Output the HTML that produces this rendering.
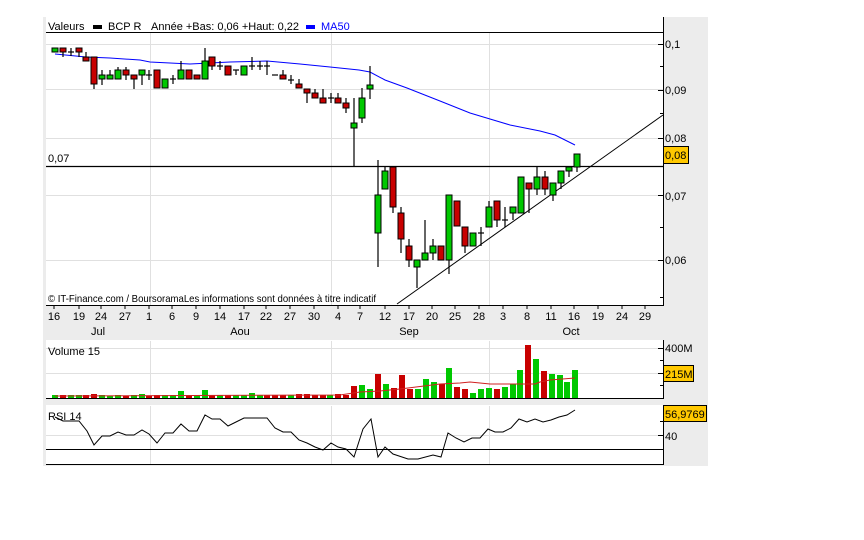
<!DOCTYPE html>
<html><head><meta charset="utf-8"><style>
html,body{margin:0;padding:0;background:#fff;width:864px;height:540px;overflow:hidden}
svg{display:block;font-family:"Liberation Sans",sans-serif;font-size:11px}
</style></head><body>
<svg width="864" height="540" viewBox="0 0 864 540" xmlns="http://www.w3.org/2000/svg">
<rect x="43" y="17" width="665" height="449" fill="#ececec"/>
<rect x="46" y="17" width="617" height="288" fill="#fff"/>
<g stroke="#e0e0e0" stroke-width="1">
<line x1="46" y1="44.5" x2="663" y2="44.5"/><line x1="46" y1="89.5" x2="663" y2="89.5"/><line x1="46" y1="138.5" x2="663" y2="138.5"/><line x1="46" y1="195.5" x2="663" y2="195.5"/><line x1="46" y1="260.5" x2="663" y2="260.5"/>
<line x1="150.5" y1="33" x2="150.5" y2="305"/><line x1="331.5" y1="33" x2="331.5" y2="305"/><line x1="489.5" y1="33" x2="489.5" y2="305"/>
</g>
<line x1="46" y1="32.5" x2="663" y2="32.5" stroke="#000"/>
<line x1="663.5" y1="17" x2="663.5" y2="306" stroke="#000"/>
<line x1="46" y1="305.5" x2="664" y2="305.5" stroke="#000"/>
<g stroke="#000"><line x1="658" y1="44.5" x2="663" y2="44.5"/><line x1="660" y1="66.5" x2="663" y2="66.5"/><line x1="658" y1="90.5" x2="663" y2="90.5"/><line x1="660" y1="113.5" x2="663" y2="113.5"/><line x1="658" y1="138.5" x2="663" y2="138.5"/><line x1="658" y1="195.5" x2="663" y2="195.5"/><line x1="660" y1="227.5" x2="663" y2="227.5"/><line x1="658" y1="260.5" x2="663" y2="260.5"/><line x1="660" y1="297.5" x2="663" y2="297.5"/></g>
<g fill="#000"><text x="665" y="48">0,1</text><text x="665" y="94">0,09</text><text x="665" y="142">0,08</text><text x="665" y="200">0,07</text><text x="665" y="264">0,06</text></g>
<rect x="663.5" y="146.5" width="25" height="17" fill="#ffc800" stroke="#000"/>
<text x="665" y="159">0,08</text>
<text x="48" y="30">Valeurs</text>
<rect x="93" y="25" width="9" height="4" fill="#000"/>
<text x="108" y="30">BCP R</text>
<text x="151" y="30">Année +Bas: 0,06 +Haut: 0,22</text>
<rect x="306" y="25" width="9" height="4" fill="#0000ff"/>
<text x="321" y="30" fill="#0000ff">MA50</text>
<line x1="46" y1="166.5" x2="663" y2="166.5" stroke="#000" stroke-width="1.2"/>
<text x="48" y="162">0,07</text>
<line x1="397" y1="304" x2="663" y2="115" stroke="#000" stroke-width="1"/>
<polyline fill="none" stroke="#0000ff" stroke-width="1" points="55,54 86,57 110,58 140,60 150,62 190,64 230,62 267,61 300,64 330,67 359,70 370,72 385,80 407,88 440,101 470,113 490,119 510,125 540,131 555,135 575,145"/>
<g stroke="#000" stroke-width="1">
<g stroke-width="1.2">
<line x1="55" y1="48" x2="55" y2="52"/><line x1="63" y1="48" x2="63" y2="57"/><line x1="71" y1="48" x2="71" y2="56"/><line x1="68" y1="52" x2="74" y2="52"/><line x1="79" y1="48" x2="79" y2="57"/><line x1="86" y1="52" x2="86" y2="61"/><line x1="94" y1="57" x2="94" y2="89"/><line x1="102" y1="70" x2="102" y2="85"/><line x1="110" y1="70" x2="110" y2="79"/><line x1="118" y1="67" x2="118" y2="79"/><line x1="126" y1="67" x2="126" y2="80"/><line x1="134" y1="75" x2="134" y2="89"/><line x1="142" y1="70" x2="142" y2="85"/><line x1="149" y1="70" x2="149" y2="80"/><line x1="146" y1="75" x2="152" y2="75"/><line x1="157" y1="70" x2="157" y2="88"/><line x1="173" y1="75" x2="173" y2="84"/><line x1="170" y1="79" x2="176" y2="79"/><line x1="181" y1="61" x2="181" y2="79"/><line x1="205" y1="48" x2="205" y2="79"/><line x1="212" y1="57" x2="212" y2="70"/><line x1="220" y1="61" x2="220" y2="70"/><line x1="217" y1="66" x2="223" y2="66"/><line x1="236" y1="70" x2="236" y2="75"/><line x1="233" y1="70" x2="239" y2="70"/><line x1="252" y1="57" x2="252" y2="70"/><line x1="249" y1="66" x2="255" y2="66"/><line x1="260" y1="61" x2="260" y2="70"/><line x1="257" y1="66" x2="263" y2="66"/><line x1="267" y1="61" x2="267" y2="75"/><line x1="264" y1="66" x2="270" y2="66"/><line x1="272" y1="75" x2="278" y2="75"/><line x1="283" y1="70" x2="283" y2="79"/><line x1="291" y1="75" x2="291" y2="84"/><line x1="288" y1="80" x2="294" y2="80"/><line x1="299" y1="79" x2="299" y2="88"/><line x1="307" y1="89" x2="307" y2="103"/><line x1="315" y1="89" x2="315" y2="98"/><line x1="323" y1="89" x2="323" y2="103"/><line x1="331" y1="93" x2="331" y2="103"/><line x1="328" y1="98" x2="334" y2="98"/><line x1="338" y1="93" x2="338" y2="103"/><line x1="346" y1="98" x2="346" y2="113"/><line x1="354" y1="98" x2="354" y2="166"/><line x1="362" y1="88" x2="362" y2="123"/><line x1="370" y1="66" x2="370" y2="99"/>
<line x1="378" y1="160" x2="378" y2="267"/><line x1="385" y1="167" x2="385" y2="189"/><line x1="393" y1="167" x2="393" y2="213"/><line x1="401" y1="207" x2="401" y2="253"/><line x1="409" y1="239" x2="409" y2="267"/><line x1="417" y1="260" x2="417" y2="288"/><line x1="425" y1="220" x2="425" y2="260"/><line x1="433" y1="239" x2="433" y2="260"/><line x1="449" y1="195" x2="449" y2="274"/><line x1="465" y1="227" x2="465" y2="253"/><line x1="481" y1="227" x2="481" y2="246"/><line x1="478" y1="233" x2="484" y2="233"/><line x1="489" y1="201" x2="489" y2="227"/><line x1="497" y1="201" x2="497" y2="227"/><line x1="505" y1="207" x2="505" y2="227"/><line x1="502" y1="220" x2="508" y2="220"/><line x1="513" y1="207" x2="513" y2="220"/><line x1="529" y1="183" x2="529" y2="213"/><line x1="537" y1="167" x2="537" y2="195"/><line x1="545" y1="171" x2="545" y2="195"/><line x1="553" y1="183" x2="553" y2="201"/><line x1="561" y1="171" x2="561" y2="189"/><line x1="569" y1="167" x2="569" y2="177"/><line x1="577" y1="154" x2="577" y2="172"/>
</g>
<g fill="#00c800">
<rect x="52" y="48" width="6" height="4"/><rect x="99" y="75" width="6" height="4"/><rect x="107" y="75" width="6" height="4"/><rect x="115" y="70" width="6" height="9"/><rect x="139" y="70" width="6" height="5"/><rect x="162" y="79" width="6" height="9"/><rect x="178" y="70" width="6" height="9"/><rect x="202" y="61" width="6" height="18"/><rect x="241" y="66" width="6" height="9"/><rect x="351" y="123" width="6" height="5"/><rect x="359" y="98" width="6" height="20"/><rect x="367" y="85" width="6" height="4"/>
<rect x="375" y="195" width="6" height="38"/><rect x="382" y="171" width="6" height="18"/><rect x="414" y="260" width="6" height="7"/><rect x="422" y="253" width="6" height="7"/><rect x="430" y="246" width="6" height="7"/><rect x="446" y="195" width="6" height="65"/><rect x="470" y="233" width="6" height="13"/><rect x="486" y="207" width="6" height="20"/><rect x="510" y="207" width="6" height="6"/><rect x="518" y="177" width="6" height="36"/><rect x="534" y="177" width="6" height="12"/><rect x="550" y="183" width="6" height="12"/><rect x="558" y="171" width="6" height="12"/><rect x="566" y="167" width="6" height="4"/><rect x="574" y="154" width="6" height="13"/>
</g>
<g fill="#c80000">
<rect x="60" y="48" width="6" height="4"/><rect x="76" y="48" width="6" height="4"/><rect x="83" y="57" width="6" height="4"/><rect x="91" y="57" width="6" height="27"/><rect x="123" y="70" width="6" height="5"/><rect x="131" y="75" width="6" height="4"/><rect x="154" y="70" width="6" height="18"/><rect x="186" y="70" width="6" height="9"/><rect x="194" y="75" width="6" height="4"/><rect x="209" y="57" width="6" height="9"/><rect x="225" y="66" width="6" height="9"/><rect x="280" y="75" width="6" height="4"/><rect x="296" y="84" width="6" height="4"/><rect x="304" y="89" width="6" height="4"/><rect x="312" y="93" width="6" height="5"/><rect x="320" y="98" width="6" height="5"/><rect x="335" y="98" width="6" height="5"/><rect x="343" y="103" width="6" height="5"/>
<rect x="390" y="167" width="6" height="40"/><rect x="398" y="213" width="6" height="26"/><rect x="406" y="246" width="6" height="14"/><rect x="438" y="246" width="6" height="14"/><rect x="454" y="201" width="6" height="25"/><rect x="462" y="227" width="6" height="19"/><rect x="494" y="201" width="6" height="19"/><rect x="526" y="183" width="6" height="6"/><rect x="542" y="177" width="6" height="12"/>
</g>
</g>
<text x="48" y="302" font-size="10.5" textLength="328" lengthAdjust="spacingAndGlyphs">© IT-Finance.com / BoursoramaLes informations sont données à titre indicatif</text>
<g stroke="#000"><line x1="54" y1="306" x2="54" y2="309"/><line x1="79" y1="306" x2="79" y2="309"/><line x1="101" y1="306" x2="101" y2="309"/><line x1="125" y1="306" x2="125" y2="309"/><line x1="149" y1="306" x2="149" y2="309"/><line x1="172" y1="306" x2="172" y2="309"/><line x1="196" y1="306" x2="196" y2="309"/><line x1="220" y1="306" x2="220" y2="309"/><line x1="244" y1="306" x2="244" y2="309"/><line x1="266" y1="306" x2="266" y2="309"/><line x1="290" y1="306" x2="290" y2="309"/><line x1="314" y1="306" x2="314" y2="309"/><line x1="338" y1="306" x2="338" y2="309"/><line x1="360" y1="306" x2="360" y2="309"/><line x1="385" y1="306" x2="385" y2="309"/><line x1="409" y1="306" x2="409" y2="309"/><line x1="432" y1="306" x2="432" y2="309"/><line x1="455" y1="306" x2="455" y2="309"/><line x1="479" y1="306" x2="479" y2="309"/><line x1="503" y1="306" x2="503" y2="309"/><line x1="527" y1="306" x2="527" y2="309"/><line x1="551" y1="306" x2="551" y2="309"/><line x1="574" y1="306" x2="574" y2="309"/><line x1="598" y1="306" x2="598" y2="309"/><line x1="622" y1="306" x2="622" y2="309"/><line x1="645" y1="306" x2="645" y2="309"/></g>
<g text-anchor="middle">
<text x="54" y="320">16</text><text x="79" y="320">19</text><text x="101" y="320">24</text><text x="125" y="320">27</text><text x="149" y="320">1</text><text x="172" y="320">6</text><text x="196" y="320">9</text><text x="220" y="320">14</text><text x="244" y="320">17</text><text x="266" y="320">22</text><text x="290" y="320">27</text><text x="314" y="320">30</text><text x="338" y="320">4</text><text x="360" y="320">7</text><text x="385" y="320">12</text><text x="409" y="320">17</text><text x="432" y="320">20</text><text x="455" y="320">25</text><text x="479" y="320">28</text><text x="503" y="320">3</text><text x="527" y="320">8</text><text x="551" y="320">11</text><text x="574" y="320">16</text><text x="598" y="320">19</text><text x="622" y="320">24</text><text x="645" y="320">29</text>
<text x="98" y="335">Jul</text><text x="240" y="335">Aou</text><text x="409" y="335">Sep</text><text x="571" y="335">Oct</text>
</g>
<rect x="46" y="340" width="617" height="59" fill="#fff"/>
<g stroke="#e0e0e0"><line x1="46" y1="348.5" x2="663" y2="348.5"/><line x1="46" y1="373.5" x2="663" y2="373.5"/><line x1="150.5" y1="341" x2="150.5" y2="398"/><line x1="331.5" y1="341" x2="331.5" y2="398"/><line x1="489.5" y1="341" x2="489.5" y2="398"/></g>
<text x="48" y="355">Volume 15</text>
<g fill="#00c800">
<rect x="52" y="395" width="6" height="3"/><rect x="68" y="395" width="6" height="3"/><rect x="76" y="395" width="6" height="3"/><rect x="99" y="395" width="6" height="3"/><rect x="107" y="396" width="6" height="2"/><rect x="115" y="395" width="6" height="3"/><rect x="131" y="395" width="6" height="3"/><rect x="139" y="394" width="6" height="4"/><rect x="162" y="395" width="6" height="3"/><rect x="170" y="395" width="6" height="3"/><rect x="178" y="391" width="6" height="7"/><rect x="194" y="395" width="6" height="3"/><rect x="202" y="390" width="6" height="8"/><rect x="217" y="395" width="6" height="3"/><rect x="233" y="395" width="6" height="3"/><rect x="241" y="395" width="6" height="3"/><rect x="249" y="393" width="6" height="5"/><rect x="257" y="395" width="6" height="3"/><rect x="288" y="395" width="6" height="3"/><rect x="327" y="395" width="6" height="3"/>
<rect x="359" y="385" width="6" height="13"/><rect x="367" y="389" width="6" height="9"/><rect x="383" y="384" width="6" height="14"/><rect x="415" y="389" width="6" height="9"/><rect x="423" y="379" width="6" height="19"/><rect x="431" y="382" width="6" height="16"/><rect x="446" y="368" width="6" height="30"/><rect x="470" y="393" width="6" height="5"/><rect x="478" y="389" width="6" height="9"/><rect x="486" y="388" width="6" height="10"/><rect x="502" y="387" width="6" height="11"/><rect x="510" y="384" width="6" height="14"/><rect x="517" y="370" width="6" height="28"/><rect x="533" y="359" width="6" height="39"/><rect x="549" y="374" width="6" height="24"/><rect x="557" y="375" width="6" height="23"/><rect x="564" y="382" width="6" height="16"/><rect x="572" y="370" width="6" height="28"/>
</g>
<g fill="#c80000">
<rect x="60" y="395" width="6" height="3"/><rect x="83" y="395" width="6" height="3"/><rect x="91" y="394" width="6" height="4"/><rect x="123" y="396" width="6" height="2"/><rect x="146" y="396" width="6" height="2"/><rect x="154" y="395" width="6" height="3"/><rect x="186" y="395" width="6" height="3"/><rect x="209" y="395" width="6" height="3"/><rect x="225" y="395" width="6" height="3"/><rect x="264" y="395" width="6" height="3"/><rect x="272" y="395" width="6" height="3"/><rect x="280" y="395" width="6" height="3"/><rect x="296" y="394" width="6" height="4"/><rect x="304" y="394" width="6" height="4"/><rect x="312" y="395" width="6" height="3"/><rect x="320" y="395" width="6" height="3"/><rect x="335" y="394" width="6" height="4"/>
<rect x="343" y="395" width="6" height="3"/><rect x="351" y="386" width="6" height="12"/><rect x="375" y="374" width="6" height="24"/><rect x="391" y="388" width="6" height="10"/><rect x="399" y="375" width="6" height="23"/><rect x="407" y="389" width="6" height="9"/><rect x="439" y="384" width="6" height="14"/><rect x="454" y="387" width="6" height="11"/><rect x="462" y="389" width="6" height="9"/><rect x="494" y="389" width="6" height="9"/><rect x="525" y="345" width="6" height="53"/><rect x="541" y="371" width="6" height="27"/>
</g>
<polyline fill="none" stroke="#d02020" stroke-width="1" points="55,396 340,395 360,392 380,391 400,389 440,384 460,383 470,382 490,384 520,384 535,384 540,382 550,380 575,378"/>
<line x1="46" y1="398.5" x2="664" y2="398.5" stroke="#000"/>
<line x1="663.5" y1="340" x2="663.5" y2="399" stroke="#000"/>
<g stroke="#000"><line x1="658" y1="348.5" x2="663" y2="348.5"/><line x1="660" y1="360.5" x2="663" y2="360.5"/><line x1="658" y1="373.5" x2="663" y2="373.5"/><line x1="660" y1="385.5" x2="663" y2="385.5"/></g>
<text x="665" y="352">400M</text>
<rect x="663.5" y="365.5" width="30" height="16" fill="#ffc800" stroke="#000"/>
<text x="665" y="378">215M</text>
<rect x="46" y="405" width="617" height="60" fill="#fff"/>
<g stroke="#e0e0e0"><line x1="46" y1="435.5" x2="663" y2="435.5"/><line x1="150.5" y1="406" x2="150.5" y2="464"/><line x1="331.5" y1="406" x2="331.5" y2="464"/><line x1="489.5" y1="406" x2="489.5" y2="464"/></g>
<line x1="46" y1="449.5" x2="663" y2="449.5" stroke="#000"/>
<text x="48" y="420">RSI 14</text>
<polyline fill="none" stroke="#000" stroke-width="1" points="55,417 63,421 79,421 87,431 94,445 102,436 110,436 118,432 126,435 134,435 142,430 149,434 157,443 165,433 173,433 181,424 189,431 197,431 205,415 212,419 220,419 228,426 236,422 244,418 267,418 275,428 283,432 291,432 299,440 307,443 315,447 323,450 331,443 338,447 346,449 354,457 363,429 371,419 378,457 385,447 393,454 408,459 418,459 433,455 441,457 448,433 456,438 464,442 472,438 480,438 488,429 495,432 503,432 511,428 519,419 527,422 535,419 543,422 551,420 559,417 567,415 575,410"/>
<line x1="46" y1="464.5" x2="664" y2="464.5" stroke="#000"/>
<line x1="663.5" y1="405" x2="663.5" y2="465" stroke="#000"/>
<g stroke="#000"><line x1="660" y1="421.5" x2="663" y2="421.5"/><line x1="658" y1="435.5" x2="663" y2="435.5"/></g>
<rect x="663.5" y="405.5" width="43" height="16" fill="#ffc800" stroke="#000"/>
<text x="665" y="418">56,9769</text>
<text x="665" y="440">40</text>
</svg>
</body></html>
